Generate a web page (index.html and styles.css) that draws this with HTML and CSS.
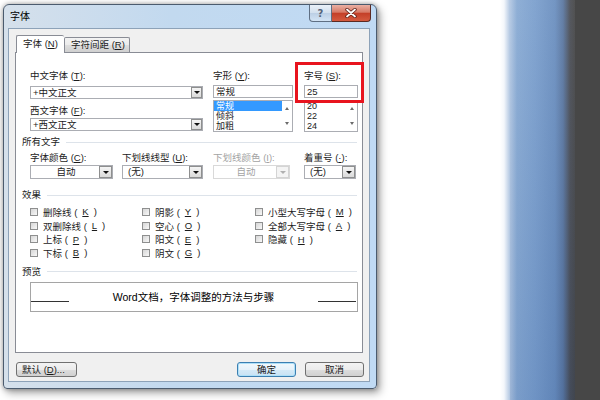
FILE: index.html
```html
<!DOCTYPE html>
<html lang="zh-CN">
<head>
    <meta charset="UTF-8">
    <title>字体</title>
    <link rel="stylesheet" href="styles.css">
</head>
<body>
    <div class="window">
        <div class="titlebar">
            <span class="title">字体</span>
            <div class="caption">
                <span class="cap-help">?</span>
                <span class="cap-close">
                    <svg width="12" height="10" viewBox="0 0 12 10">
                        <path d="M2 1.5 L10 8.5 M10 1.5 L2 8.5" stroke="#5a1d14" stroke-width="3.4" stroke-linecap="round"/>
                        <path d="M2 1.5 L10 8.5 M10 1.5 L2 8.5" stroke="#fff" stroke-width="1.8" stroke-linecap="round"/>
                    </svg>
                </span>
            </div>
        </div>

        <div class="client">
            <div class="tabs">
                <span class="tab active">字体 (<u>N</u>)</span>
                <span class="tab second">字符间距 (<u>R</u>)</span>
            </div>

            <div class="panel">
                <div class="font-top">
                    <div class="col-a">
                        <div class="label">中文字体 (<u>T</u>):</div>
                        <div class="combo gap4">
                            <span class="value">+中文正文</span>
                            <span class="arrow"><i></i></span>
                        </div>
                        <div class="label gap6">西文字体 (<u>F</u>):</div>
                        <div class="combo gap1">
                            <span class="value">+西文正文</span>
                            <span class="arrow"><i></i></span>
                        </div>
                    </div>
                    <div class="col-b">
                        <div class="label">字形 (<u>Y</u>):</div>
                        <div class="field">常规</div>
                        <div class="listbox">
                            <div class="items">
                                <div class="item sel">常规</div>
                                <div class="item">倾斜</div>
                                <div class="item">加粗</div>
                            </div>
                            <div class="scroll"><i class="up"></i><i class="down"></i></div>
                        </div>
                    </div>
                    <div class="col-c">
                        <div class="label">字号 (<u>S</u>):</div>
                        <div class="field">25</div>
                        <div class="listbox">
                            <div class="items">
                                <div class="item">20</div>
                                <div class="item">22</div>
                                <div class="item">24</div>
                            </div>
                            <div class="scroll"><i class="up"></i><i class="down"></i></div>
                        </div>
                    </div>
                </div>

                <div class="group-title first">所有文字</div>
                <div class="font-all">
                    <div class="col-color">
                        <div class="label">字体颜色 (<u>C</u>):</div>
                        <div class="combo tall">
                            <span class="value center">自动</span>
                            <span class="arrow"><i></i></span>
                        </div>
                    </div>
                    <div class="col-uline">
                        <div class="label">下划线线型 (<u>U</u>):</div>
                        <div class="combo tall">
                            <span class="value pad">(无)</span>
                            <span class="arrow"><i></i></span>
                        </div>
                    </div>
                    <div class="col-ucolor disabled">
                        <div class="label">下划线颜色 (<u>I</u>):</div>
                        <div class="combo tall">
                            <span class="value center">自动</span>
                            <span class="arrow"><i></i></span>
                        </div>
                    </div>
                    <div class="col-emph">
                        <div class="label">着重号 (<u>·</u>):</div>
                        <div class="combo tall">
                            <span class="value pad">(无)</span>
                            <span class="arrow"><i></i></span>
                        </div>
                    </div>
                </div>

                <div class="group-title effects">效果</div>
                <div class="checks">
                    <label class="check"><span class="box"></span>删除线 (<u>K</u>)</label>
                    <label class="check"><span class="box"></span>双删除线 (<u>L</u>)</label>
                    <label class="check"><span class="box"></span>上标 (<u>P</u>)</label>
                    <label class="check"><span class="box"></span>下标 (<u>B</u>)</label>
                    <label class="check"><span class="box"></span>阴影 (<u>Y</u>)</label>
                    <label class="check"><span class="box"></span>空心 (<u>O</u>)</label>
                    <label class="check"><span class="box"></span>阳文 (<u>E</u>)</label>
                    <label class="check"><span class="box"></span>阴文 (<u>G</u>)</label>
                    <label class="check"><span class="box"></span>小型大写字母 (<u>M</u>)</label>
                    <label class="check"><span class="box"></span>全部大写字母 (<u>A</u>)</label>
                    <label class="check"><span class="box"></span>隐藏 (<u>H</u>)</label>
                </div>

                <div class="group-title preview-title">预览</div>
                <div class="preview">
                    <span class="rule"></span>
                    <span class="sample">Word文档，字体调整的方法与步骤</span>
                    <span class="rule"></span>
                </div>

                <!-- red mark around the size field -->
                <div class="highlight"></div>
            </div>

            <div class="footer">
                <button class="btn btn-default">默认 (<u>D</u>)...</button>
                <button class="btn primary">确定</button>
                <button class="btn cancel">取消</button>
            </div>
        </div>
    </div>

    <div class="desk"></div>
</body>
</html>
```

FILE: styles.css
```css
* {
    box-sizing: border-box;
}

body {
    margin: 0;
    width: 600px;
    height: 400px;
    overflow: hidden;
    background: #fff;
    display: flex;
    font-family: "Liberation Sans", "Noto Sans CJK SC", sans-serif;
    font-size: 9.5px;
    color: #1b1b1b;
}

u {
    text-decoration: underline;
}

/* window frame */
.window {
    margin: 4px 0 0 3px;
    width: 374px;
    height: 385px;
    border: 1px solid #4b5b6e;
    border-radius: 6px 6px 4px 4px;
    padding: 0 6px 6px 4px;
    background: linear-gradient(to right, #d5e0eb, #c2d9ef 45%, #c0daf4);
    box-shadow: 0 0 5px rgba(0, 0, 0, .35), 3px 4px 8px rgba(0, 0, 0, .35);
    display: flex;
    flex-direction: column;
    flex-shrink: 0;
}

.titlebar {
    height: 23px;
    display: flex;
    align-items: flex-start;
}

.title {
    margin: 6px 0 0 2px;
    font-size: 10px;
    line-height: 12px;
    color: #000;
}

.caption {
    margin-left: auto;
    margin-right: -1px;
    display: flex;
}

.cap-help {
    width: 23px;
    height: 17px;
    border: 1px solid #5f6f83;
    border-top: none;
    border-radius: 0 0 0 4px;
    background: linear-gradient(#e9f0f8, #d3e0ee 48%, #bccfe5 52%, #d3e4f5);
    display: flex;
    align-items: center;
    justify-content: center;
    font-family: "DejaVu Sans", sans-serif;
    font-size: 10px;
    font-weight: bold;
    color: #55647a;
}

.cap-close {
    width: 39px;
    height: 17px;
    border: 1px solid #5b2a23;
    border-left: none;
    border-top: none;
    border-radius: 0 0 4px 0;
    background: linear-gradient(#eab0a3, #d77a66 45%, #c43f28 52%, #d45a3f);
    display: flex;
    align-items: center;
    justify-content: center;
}

/* client area */
.client {
    height: 354px;
    border: 1px solid #8da2b8;
    background: #f0f0f0;
    padding: 6px 6px 0 6px;
}

.tabs {
    display: flex;
    align-items: flex-end;
    height: 17px;
    margin-left: 1px;
    position: relative;
    z-index: 1;
}

.tab {
    height: 15px;
    border: 1px solid #898c95;
    border-bottom: none;
    border-radius: 2px 2px 0 0;
    background: linear-gradient(#f3f3f3, #ebebeb 50%, #dedede 51%, #d0d0d0);
    padding-left: 6px;
    line-height: 13px;
    white-space: nowrap;
}

.tab.active {
    width: 48px;
    height: 18px;
    margin-bottom: -1px;
    background: #fff;
    border-right: none;
    line-height: 15px;
}

.tab.second {
    width: 66px;
}

.panel {
    position: relative;
    height: 301px;
    border: 1px solid #898c95;
    background: #fff;
    padding: 17px 0 0 14px;
}

.label {
    height: 12px;
    line-height: 12px;
    white-space: nowrap;
}

.gap1 { margin-top: 1px; }
.gap4 { margin-top: 4px; }
.gap6 { margin-top: 6px; }

/* combo boxes */
.combo {
    display: flex;
    height: 13px;
    border: 1px solid #abadb3;
    background: #fff;
}

.combo.tall {
    height: 14px;
    margin-top: 1px;
}

.combo .value {
    flex: 1;
    padding-left: 2px;
    line-height: 11px;
    white-space: nowrap;
}

.combo.tall .value {
    line-height: 12px;
}

.combo .value.center {
    text-align: center;
}

.combo .value.pad {
    padding-left: 5px;
}

.arrow {
    width: 11px;
    border: 1px solid #8e8f8f;
    background: linear-gradient(#f5f5f5, #dadada);
    display: flex;
    align-items: center;
    justify-content: center;
}

.combo.tall .arrow {
    width: 13px;
}

.arrow i {
    border-top: 3px solid #111;
    border-left: 3px solid transparent;
    border-right: 3px solid transparent;
}

.disabled {
    color: #a3a3a3;
}

.disabled .combo {
    border-color: #d9d9d9;
}

.disabled .arrow {
    border-color: #d4d4d4;
    background: #f4f4f4;
}

.disabled .arrow i {
    border-top-color: #b0b0b0;
}

/* top block */
.font-top {
    display: flex;
}

.col-a { width: 173px; }
.col-b { width: 80px; margin-left: 10px; }
.col-c { width: 54px; margin-left: 11px; }

.field {
    margin-top: 3px;
    height: 13px;
    border: 1px solid #abadb3;
    padding-left: 2px;
    line-height: 11px;
}

.listbox {
    margin-top: 2px;
    height: 32px;
    border: 1px solid #abadb3;
    display: flex;
    overflow: hidden;
}

.items {
    flex: 1;
}

.item {
    height: 10px;
    line-height: 10px;
    padding-left: 2px;
    font-size: 9px;
    overflow: hidden;
}

.item.sel {
    background: #3399ff;
    color: #fff;
}

.scroll {
    width: 10px;
    display: flex;
    flex-direction: column;
    align-items: center;
    justify-content: space-between;
    padding: 6px 0 6px;
}

.scroll .up {
    border-bottom: 3px solid #6b6b6b;
    border-left: 2.5px solid transparent;
    border-right: 2.5px solid transparent;
}

.scroll .down {
    border-top: 3px solid #6b6b6b;
    border-left: 2.5px solid transparent;
    border-right: 2.5px solid transparent;
}

/* group titles */
.group-title {
    display: flex;
    align-items: center;
    height: 12px;
    line-height: 12px;
    margin-left: -8px;
    margin-right: 5px;
    white-space: nowrap;
}

.group-title::after {
    content: "";
    flex: 1;
    margin-left: 6px;
    border-top: 1px solid #dde3ea;
}

.group-title.first { margin-top: 4px; }
.group-title.effects { margin-top: 10px; }
.group-title.preview-title { margin-top: 6px; }

.font-all {
    display: flex;
    margin-top: 4px;
}

.col-color { width: 83px; }
.col-uline { width: 81px; margin-left: 9px; }
.col-ucolor { width: 77px; margin-left: 10px; }
.col-emph { width: 52px; margin-left: 14px; }

/* checkboxes */
.checks {
    margin-top: 4px;
    display: grid;
    grid-template-columns: 112px 113px 1fr;
    grid-template-rows: repeat(4, 13.7px);
    grid-auto-flow: column;
}

.check {
    display: flex;
    align-items: center;
    gap: 5px;
    white-space: nowrap;
}

.box {
    width: 8px;
    height: 8px;
    border: 1px solid #8e8f8f;
    background: linear-gradient(135deg, #d6d6d6, #f8f8f8);
}

/* preview */
.preview {
    margin-top: 4px;
    width: 328px;
    height: 30px;
    border: 1px solid #a5a5a5;
    display: flex;
    align-items: center;
    justify-content: space-between;
    padding-right: 1px;
}

.preview .rule {
    width: 38px;
    align-self: flex-end;
    margin-bottom: 9px;
    border-top: 1px solid #333;
}

.sample {
    font-size: 10.5px;
    color: #000;
}

.highlight {
    position: absolute;
    left: 279px;
    top: 9px;
    width: 69px;
    height: 41px;
    border: 3px solid #e8141e;
}

/* buttons */
.footer {
    display: flex;
    margin-top: 9px;
    padding: 0 0 0 1px;
}

.btn {
    height: 15px;
    width: 59px;
    padding: 0;
    border: 1px solid #707070;
    border-radius: 3px;
    background: linear-gradient(#f3f3f3, #ebebeb 50%, #dddddd 51%, #d0d0d0);
    font-family: inherit;
    font-size: 9.5px;
    line-height: 13px;
    color: #1b1b1b;
}

.btn-default {
    width: 61px;
    text-align: left;
    padding-left: 5px;
}

.btn.primary {
    margin-left: auto;
    border-color: #3c7fb1;
    box-shadow: inset 0 0 0 1px #aee0f8;
    background: linear-gradient(#f2f8fc, #e6f2fa 50%, #d5eaf7 51%, #c9e2f4);
}

.btn.cancel {
    margin-left: 9px;
    margin-right: -1px;
}

/* blurred desktop strip on the right */
.desk {
    margin-left: auto;
    width: 100px;
    height: 400px;
    position: relative;
    background: linear-gradient(to right, #fff 0, #f4f7fb 4px, #b2c7e2 10px, #88aad3 17px, #7b9fcd 35px, #6b8fbf 55px, #5b77a0 63px, #4b4e55 70px, #474747 75px);
}

.desk::after {
    content: "";
    position: absolute;
    left: 10px;
    top: 0;
    width: 65px;
    height: 100%;
    background: linear-gradient(rgba(255, 255, 255, .06), rgba(20, 60, 130, .12));
}
```
